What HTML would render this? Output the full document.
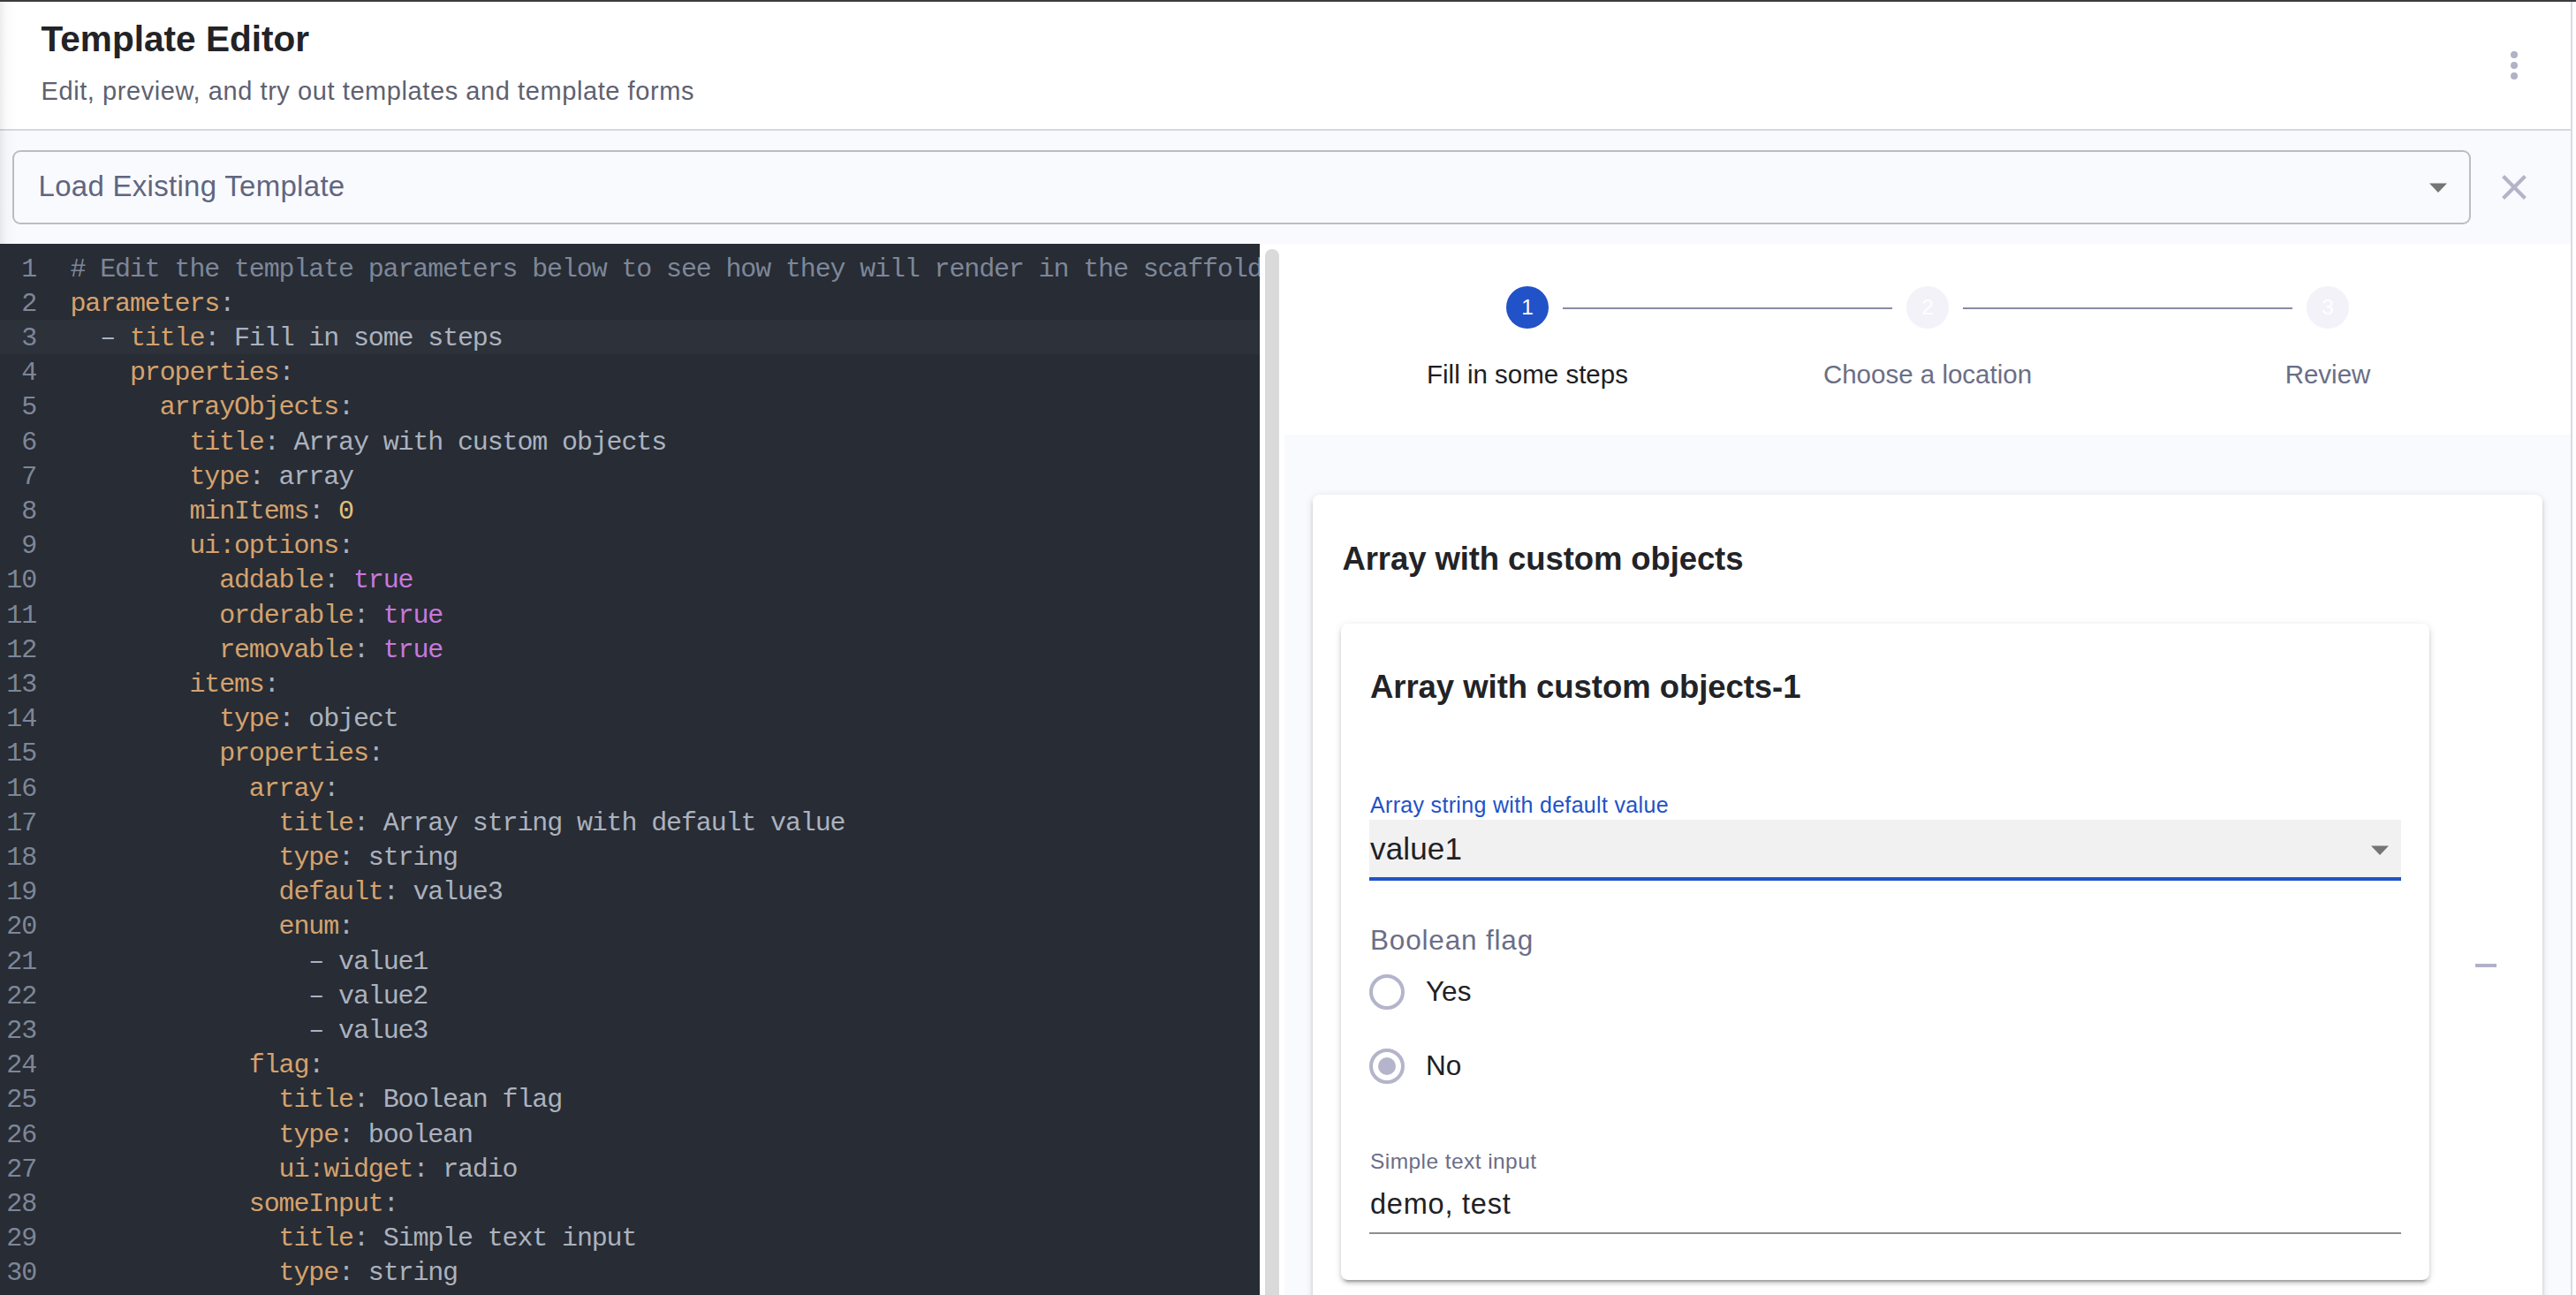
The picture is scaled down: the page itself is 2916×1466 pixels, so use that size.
<!DOCTYPE html>
<html><head><meta charset="utf-8"><title>Template Editor</title>
<style>
html,body{margin:0;padding:0;}
body{width:2916px;height:1466px;overflow:hidden;position:relative;background:#ffffff;font-family:"Liberation Sans", sans-serif;}
.t{position:absolute;white-space:nowrap;}
.r{position:absolute;}
.cl{position:absolute;left:0;height:39.2px;line-height:39.2px;font-family:"Liberation Mono", monospace;font-size:30px;white-space:pre;color:#abb2bf;width:1426px;letter-spacing:-1.140px;}
.ln{position:absolute;left:0;width:41px;text-align:right;color:#7d8799;}
.cx{position:absolute;left:79.5px;}
</style></head><body>
<div class="r" style="left:0px;top:0px;width:2916px;height:2px;background:#3b3c3d"></div><div class="t" style="left:46.50px;top:23.53px;font-size:40.6px;line-height:40.6px;color:#222327;font-weight:700;letter-spacing:0px;">Template Editor</div><div class="t" style="left:46.50px;top:89.25px;font-size:29px;line-height:29px;color:#5e6170;font-weight:400;letter-spacing:0.58px;">Edit, preview, and try out templates and template forms</div><div class="r" style="left:2842px;top:58px;width:8px;height:8px;border-radius:50%;background:#b1b1c7"></div><div class="r" style="left:2842px;top:70px;width:8px;height:8px;border-radius:50%;background:#b1b1c7"></div><div class="r" style="left:2842px;top:82px;width:8px;height:8px;border-radius:50%;background:#b1b1c7"></div><div class="r" style="left:0px;top:146px;width:2910px;height:2px;background:#d7d7e4"></div><div class="r" style="left:0px;top:148px;width:2910px;height:128px;background:#f9fafe"></div><div class="r" style="left:14px;top:170px;width:2783px;height:84px;box-sizing:border-box;border:2px solid #bcbdc1;border-radius:9px;background:#f9fafe"></div><div class="t" style="left:43.50px;top:193.77px;font-size:33px;line-height:33px;color:#5f6680;font-weight:400;letter-spacing:0.29px;">Load Existing Template</div><svg class="r" style="left:2750px;top:207px" width="20" height="11" viewBox="0 0 20 11"><path d="M0 0.5 L20 0.5 L10 11 Z" fill="#757575"/></svg><svg class="r" style="left:2830px;top:196px" width="32" height="32" viewBox="0 0 32 32"><path d="M3.6 3.6 L28.4 28.4 M28.4 3.6 L3.6 28.4" stroke="#b3b4c8" stroke-width="4.2"/></svg><div class="r" style="left:2910px;top:2px;width:2px;height:1464px;background:#d9d9e6"></div><div class="r" style="left:0px;top:276px;width:1426px;height:1190px;background:#282c34"></div><div class="r" style="left:0px;top:361.7px;width:1426px;height:39.19999999999999px;background:#2c313a"></div><div class="r" style="left:0;top:0;width:1426px;height:1466px;overflow:hidden"><div class="cl" style="top:285.60px"><span class="ln">1</span><span class="cx"><span style="color:#7d8799"># Edit the template parameters below to see how they will render in the scaffolder form UI</span></span></div><div class="cl" style="top:324.80px"><span class="ln">2</span><span class="cx"><span style="color:#d4a26e">parameters</span><span style="color:#abb2bf">:</span></span></div><div class="cl" style="top:364.00px"><span class="ln">3</span><span class="cx">  <span style="color:#abb2bf">– </span><span style="color:#d4a26e">title</span><span style="color:#abb2bf">:</span> <span style="color:#abb2bf">Fill in some steps</span></span></div><div class="cl" style="top:403.20px"><span class="ln">4</span><span class="cx">    <span style="color:#d4a26e">properties</span><span style="color:#abb2bf">:</span></span></div><div class="cl" style="top:442.40px"><span class="ln">5</span><span class="cx">      <span style="color:#d4a26e">arrayObjects</span><span style="color:#abb2bf">:</span></span></div><div class="cl" style="top:481.60px"><span class="ln">6</span><span class="cx">        <span style="color:#d4a26e">title</span><span style="color:#abb2bf">:</span> <span style="color:#abb2bf">Array with custom objects</span></span></div><div class="cl" style="top:520.80px"><span class="ln">7</span><span class="cx">        <span style="color:#d4a26e">type</span><span style="color:#abb2bf">:</span> <span style="color:#abb2bf">array</span></span></div><div class="cl" style="top:560.00px"><span class="ln">8</span><span class="cx">        <span style="color:#d4a26e">minItems</span><span style="color:#abb2bf">:</span> <span style="color:#e5c07b">0</span></span></div><div class="cl" style="top:599.20px"><span class="ln">9</span><span class="cx">        <span style="color:#d4a26e">ui:options</span><span style="color:#abb2bf">:</span></span></div><div class="cl" style="top:638.40px"><span class="ln">10</span><span class="cx">          <span style="color:#d4a26e">addable</span><span style="color:#abb2bf">:</span> <span style="color:#c678dd">true</span></span></div><div class="cl" style="top:677.60px"><span class="ln">11</span><span class="cx">          <span style="color:#d4a26e">orderable</span><span style="color:#abb2bf">:</span> <span style="color:#c678dd">true</span></span></div><div class="cl" style="top:716.80px"><span class="ln">12</span><span class="cx">          <span style="color:#d4a26e">removable</span><span style="color:#abb2bf">:</span> <span style="color:#c678dd">true</span></span></div><div class="cl" style="top:756.00px"><span class="ln">13</span><span class="cx">        <span style="color:#d4a26e">items</span><span style="color:#abb2bf">:</span></span></div><div class="cl" style="top:795.20px"><span class="ln">14</span><span class="cx">          <span style="color:#d4a26e">type</span><span style="color:#abb2bf">:</span> <span style="color:#abb2bf">object</span></span></div><div class="cl" style="top:834.40px"><span class="ln">15</span><span class="cx">          <span style="color:#d4a26e">properties</span><span style="color:#abb2bf">:</span></span></div><div class="cl" style="top:873.60px"><span class="ln">16</span><span class="cx">            <span style="color:#d4a26e">array</span><span style="color:#abb2bf">:</span></span></div><div class="cl" style="top:912.80px"><span class="ln">17</span><span class="cx">              <span style="color:#d4a26e">title</span><span style="color:#abb2bf">:</span> <span style="color:#abb2bf">Array string with default value</span></span></div><div class="cl" style="top:952.00px"><span class="ln">18</span><span class="cx">              <span style="color:#d4a26e">type</span><span style="color:#abb2bf">:</span> <span style="color:#abb2bf">string</span></span></div><div class="cl" style="top:991.20px"><span class="ln">19</span><span class="cx">              <span style="color:#d4a26e">default</span><span style="color:#abb2bf">:</span> <span style="color:#abb2bf">value3</span></span></div><div class="cl" style="top:1030.40px"><span class="ln">20</span><span class="cx">              <span style="color:#d4a26e">enum</span><span style="color:#abb2bf">:</span></span></div><div class="cl" style="top:1069.60px"><span class="ln">21</span><span class="cx">                <span style="color:#abb2bf">– </span><span style="color:#abb2bf">value1</span></span></div><div class="cl" style="top:1108.80px"><span class="ln">22</span><span class="cx">                <span style="color:#abb2bf">– </span><span style="color:#abb2bf">value2</span></span></div><div class="cl" style="top:1148.00px"><span class="ln">23</span><span class="cx">                <span style="color:#abb2bf">– </span><span style="color:#abb2bf">value3</span></span></div><div class="cl" style="top:1187.20px"><span class="ln">24</span><span class="cx">            <span style="color:#d4a26e">flag</span><span style="color:#abb2bf">:</span></span></div><div class="cl" style="top:1226.40px"><span class="ln">25</span><span class="cx">              <span style="color:#d4a26e">title</span><span style="color:#abb2bf">:</span> <span style="color:#abb2bf">Boolean flag</span></span></div><div class="cl" style="top:1265.60px"><span class="ln">26</span><span class="cx">              <span style="color:#d4a26e">type</span><span style="color:#abb2bf">:</span> <span style="color:#abb2bf">boolean</span></span></div><div class="cl" style="top:1304.80px"><span class="ln">27</span><span class="cx">              <span style="color:#d4a26e">ui:widget</span><span style="color:#abb2bf">:</span> <span style="color:#abb2bf">radio</span></span></div><div class="cl" style="top:1344.00px"><span class="ln">28</span><span class="cx">            <span style="color:#d4a26e">someInput</span><span style="color:#abb2bf">:</span></span></div><div class="cl" style="top:1383.20px"><span class="ln">29</span><span class="cx">              <span style="color:#d4a26e">title</span><span style="color:#abb2bf">:</span> <span style="color:#abb2bf">Simple text input</span></span></div><div class="cl" style="top:1422.40px"><span class="ln">30</span><span class="cx">              <span style="color:#d4a26e">type</span><span style="color:#abb2bf">:</span> <span style="color:#abb2bf">string</span></span></div></div><div class="r" style="left:1432px;top:282px;width:16px;height:1200px;border-radius:8px;background:#dadada"></div><div class="r" style="left:1454px;top:492px;width:1456px;height:974px;background:#f9fafe"></div><div class="r" style="left:1769px;top:348px;width:373px;height:2px;background:#8a8aa6"></div><div class="r" style="left:2222px;top:348px;width:373px;height:2px;background:#8a8aa6"></div><div class="r" style="left:1705px;top:324px;width:48px;height:48px;border-radius:50%;background:#2252c7"></div><div class="t" style="left:1705.00px;width:48px;text-align:center;top:335.96px;font-size:24.5px;line-height:24.5px;color:#ffffff;font-weight:400;letter-spacing:0px">1</div><div class="r" style="left:2158px;top:324px;width:48px;height:48px;border-radius:50%;background:#f2f2f8"></div><div class="t" style="left:2158.00px;width:48px;text-align:center;top:335.96px;font-size:24.5px;line-height:24.5px;color:#ffffff;font-weight:400;letter-spacing:0px">2</div><div class="r" style="left:2611px;top:324px;width:48px;height:48px;border-radius:50%;background:#f2f2f8"></div><div class="t" style="left:2611.00px;width:48px;text-align:center;top:335.96px;font-size:24.5px;line-height:24.5px;color:#ffffff;font-weight:400;letter-spacing:0px">3</div><div class="t" style="left:1429.00px;width:600px;text-align:center;top:409.23px;font-size:29.5px;line-height:29.5px;color:#1d1e23;font-weight:400;letter-spacing:0px">Fill in some steps</div><div class="t" style="left:1882.00px;width:600px;text-align:center;top:409.23px;font-size:29.5px;line-height:29.5px;color:#6b6e86;font-weight:400;letter-spacing:0px">Choose a location</div><div class="t" style="left:2335.00px;width:600px;text-align:center;top:409.23px;font-size:29.5px;line-height:29.5px;color:#6b6e86;font-weight:400;letter-spacing:0px">Review</div><div class="r" style="left:1486px;top:560px;width:1392px;height:1000px;border-radius:8px;background:#fff;box-shadow:0 6px 2px -4px rgba(0,0,0,0.2),0 4px 4px 0 rgba(0,0,0,0.14),0 2px 10px 0 rgba(0,0,0,0.12)"></div><div class="t" style="left:1519.50px;top:614.80px;font-size:36.5px;line-height:36.5px;color:#222327;font-weight:700;letter-spacing:-0.1px;">Array with custom objects</div><div class="r" style="left:1518px;top:705.5px;width:1232px;height:743px;border-radius:8px;background:#fff;box-shadow:0 6px 2px -4px rgba(0,0,0,0.2),0 4px 4px 0 rgba(0,0,0,0.14),0 2px 10px 0 rgba(0,0,0,0.12)"></div><div class="t" style="left:1551.00px;top:760.05px;font-size:36.5px;line-height:36.5px;color:#222327;font-weight:700;letter-spacing:-0.05px;">Array with custom objects-1</div><div class="t" style="left:1551.00px;top:898.54px;font-size:25px;line-height:25px;color:#2152c8;font-weight:400;letter-spacing:0.32px;">Array string with default value</div><div class="r" style="left:1550px;top:928px;width:1168px;height:69px;box-sizing:border-box;border-bottom:4px solid #2152c8;background:#f1f1f1"></div><div class="t" style="left:1551.00px;top:942.57px;font-size:35px;line-height:35px;color:#202126;font-weight:400;letter-spacing:0.15px;">value1</div><svg class="r" style="left:2684px;top:957px" width="20" height="11" viewBox="0 0 20 11"><path d="M0 0.5 L20 0.5 L10 11 Z" fill="#757575"/></svg><div class="t" style="left:1551.00px;top:1049.04px;font-size:31.5px;line-height:31.5px;color:#6b6e86;font-weight:400;letter-spacing:0.82px;">Boolean flag</div><div class="r" style="left:1550px;top:1103px;width:40px;height:40px;box-sizing:border-box;border:4px solid #b4b4ca;border-radius:50%"></div><div class="t" style="left:1614.00px;top:1107.29px;font-size:31.5px;line-height:31.5px;color:#202126;font-weight:400;letter-spacing:0px;">Yes</div><div class="r" style="left:1550px;top:1187px;width:40px;height:40px;box-sizing:border-box;border:4px solid #b4b4ca;border-radius:50%"></div><div class="r" style="left:1560px;top:1197px;width:20px;height:20px;border-radius:50%;background:#b4b4ca"></div><div class="t" style="left:1614.00px;top:1191.04px;font-size:31.5px;line-height:31.5px;color:#202126;font-weight:400;letter-spacing:0px;">No</div><div class="t" style="left:1551.00px;top:1302.96px;font-size:24.5px;line-height:24.5px;color:#6b6e86;font-weight:400;letter-spacing:0.43px;">Simple text input</div><div class="t" style="left:1551.00px;top:1346.94px;font-size:32.5px;line-height:32.5px;color:#202126;font-weight:400;letter-spacing:0.78px;">demo, test</div><div class="r" style="left:1550px;top:1395px;width:1168px;height:2px;background:#8d8d8d"></div><div class="r" style="left:2802px;top:1091px;width:24px;height:4px;background:#b1b1c7"></div><div class="r" style="left:0;top:2px;width:18px;height:274px;background:linear-gradient(90deg,rgba(0,0,0,0.07),rgba(0,0,0,0.02) 40%,rgba(0,0,0,0))"></div>
</body></html>
